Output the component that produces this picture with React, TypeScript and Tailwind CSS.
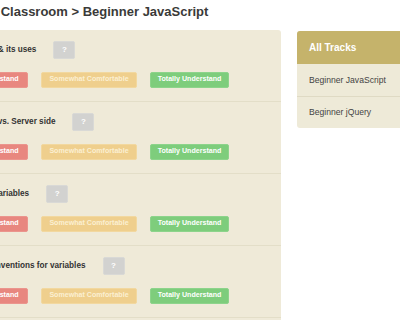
const topics = [
  "JavaScript & its uses",
  "Client side vs. Server side",
  "Declaring variables",
  "Naming conventions for variables",
  "Using operators",
];

const Topic = ({ title }: { title: string }) => {
  return (
    <div className="pt-[11px] pb-[13px] px-[20px] border-b border-[#e3dec8]">
      <div className="flex items-center gap-[17px] h-[18px] pl-[2px]">
        <span className="text-[8.2px] font-bold text-[#333333]">{title}</span>
        <button className="w-[22px] h-[18px] rounded-[2px] bg-[#d2d2d0] border border-[#d9d9d6] text-white text-[8px] font-bold leading-none">
          ?
        </button>
      </div>
      <div className="flex gap-[13px] mt-[13px] ml-[-2px]">
        <button className="h-[16px] w-[78px] rounded-[2px] bg-[#e8877f] border border-[#eb958d] text-white text-[7.1px] font-bold leading-none">
          Don't Understand
        </button>
        <button className="h-[16px] w-[96px] rounded-[2px] bg-[#efcf8d] border border-[#f2d89f] text-[#fbefd2] text-[7.1px] font-bold leading-none">
          Somewhat Comfortable
        </button>
        <button className="h-[16px] w-[79px] rounded-[2px] bg-[#7ecd7c] border border-[#8dd48b] text-white text-[7.1px] font-bold leading-none">
          Totally Understand
        </button>
      </div>
    </div>
  );
};

const App = () => {
  return (
    <div className="w-[400px] h-[320px] overflow-hidden bg-white font-['Liberation_Sans',Arial,sans-serif]">
      <div className="ml-[-68px] w-[500px]">
        <h1 className="pl-[47px] pt-[3px] h-[30px] text-[13px] leading-[18px] font-bold text-[#3a3a38]">
          My Classroom &gt; Beginner JavaScript
        </h1>
        <div className="flex items-start gap-[16px]">
          <div className="w-[349px] bg-[#efead8] rounded-tr-[3px]">
            {topics.map((t) => (
              <Topic key={t} title={t} />
            ))}
          </div>
          <div className="w-[135px] mt-[1px] rounded-[3px] overflow-hidden bg-[#eeead8]">
            <div className="h-[33px] bg-[#c5b36b] flex items-center pl-[12px] text-[10px] font-bold text-white">
              All Tracks
            </div>
            <div className="h-[33px] flex items-center pl-[12px] border-b border-[#dfdac4] text-[8.6px] text-[#444444]">
              Beginner JavaScript
            </div>
            <div className="h-[31px] flex items-center pl-[12px] text-[8.6px] text-[#444444]">
              Beginner jQuery
            </div>
          </div>
        </div>
      </div>
    </div>
  );
};

export default App;
